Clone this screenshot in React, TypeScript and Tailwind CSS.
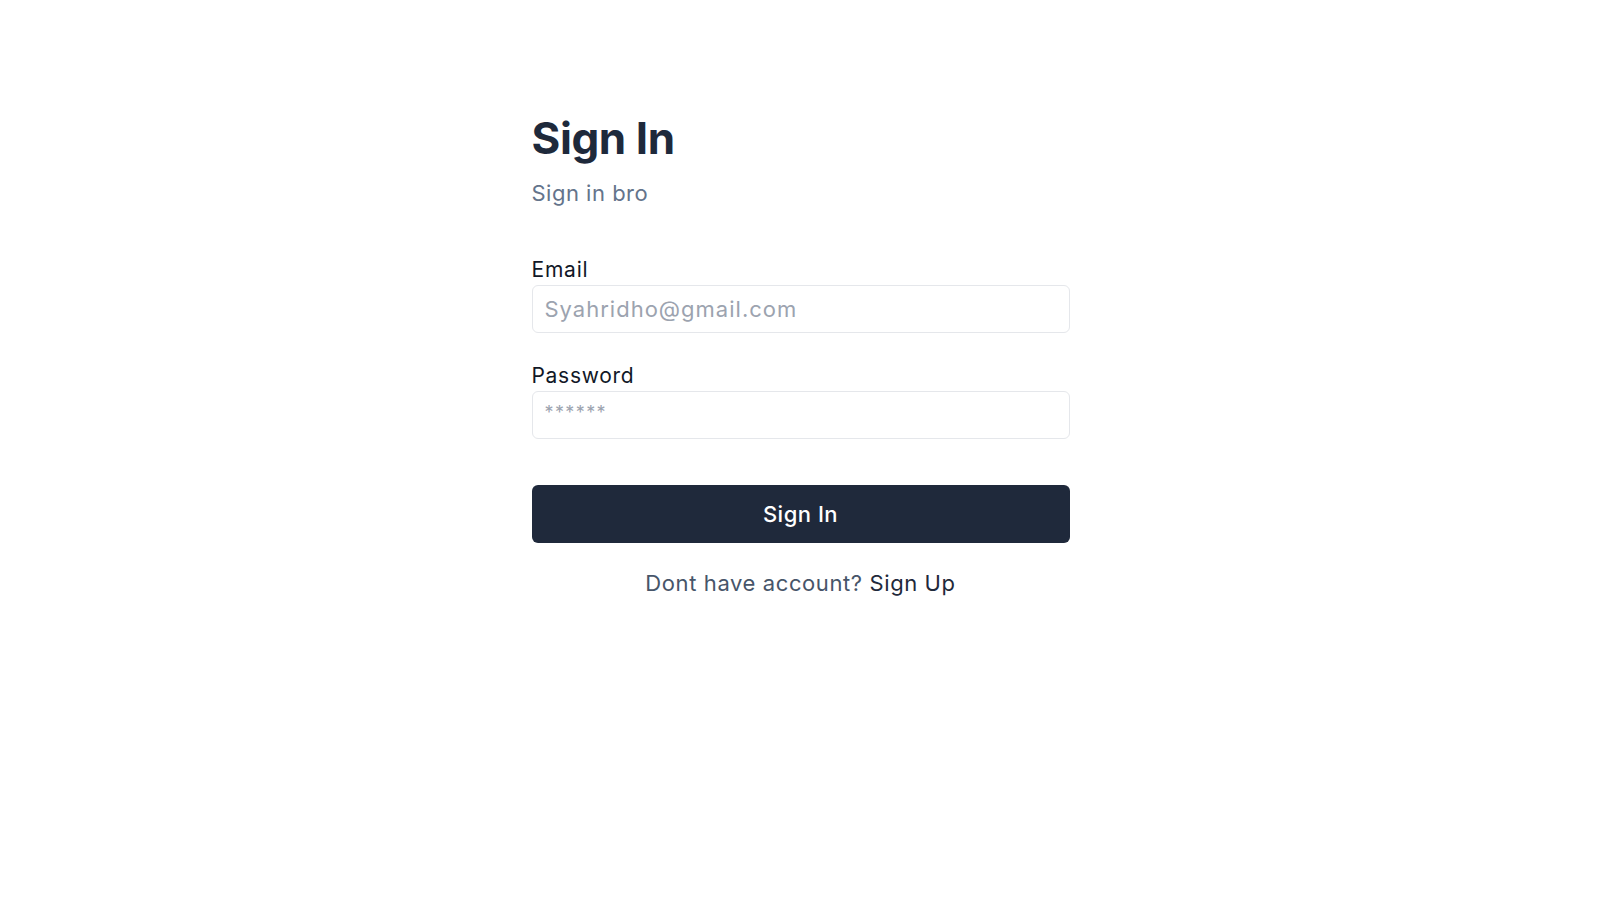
export default function App() {
  return (
    <div className="min-h-screen w-full bg-white flex justify-center font-['Inter','Noto_Sans',sans-serif]">
      <div className="w-[538px] pt-[110px]">
        <h1 className="text-[44px] leading-[56px] font-bold text-[#1e293b] tracking-[-0.4px]">Sign In</h1>
        <p className="mt-[12px] text-[22px] leading-[30px] text-[#64748b] tracking-[0.5px]">Sign in bro</p>

        <form className="mt-[49px] flex flex-col" onSubmit={(e) => e.preventDefault()}>
          <label className="text-[21px] leading-[26px] text-[#111827] tracking-[0.8px]">Email</label>
          <input
            type="email"
            placeholder="Syahridho@gmail.com"
            className="mt-[2px] h-[48px] w-full rounded-md border border-[#e5e7eb] px-[12px] text-[22px] tracking-[1px] text-gray-900 placeholder:text-[#9ca3af] outline-none"
          />

          <label className="mt-[30px] text-[21px] leading-[26px] text-[#111827] tracking-[0.7px]">Password</label>
          <input
            type="password"
            placeholder="******"
            className="mt-[2px] h-[48px] w-full rounded-md border border-[#e5e7eb] px-[12px] pb-[6px] text-[18px] tracking-[1.4px] text-gray-900 placeholder:text-[#9ca3af] outline-none"
          />

          <button
            type="submit"
            className="mt-[46px] h-[58px] w-full rounded-md bg-[#1f293b] text-white text-[22px] tracking-[0.5px] font-medium"
          >
            Sign In
          </button>
        </form>

        <p className="mt-[25px] text-center text-[22px] leading-[30px] text-[#475569] tracking-[0.6px]">
          Dont have account? <a href="#" className="text-[#1f293b]">Sign Up</a>
        </p>
      </div>
    </div>
  );
}
